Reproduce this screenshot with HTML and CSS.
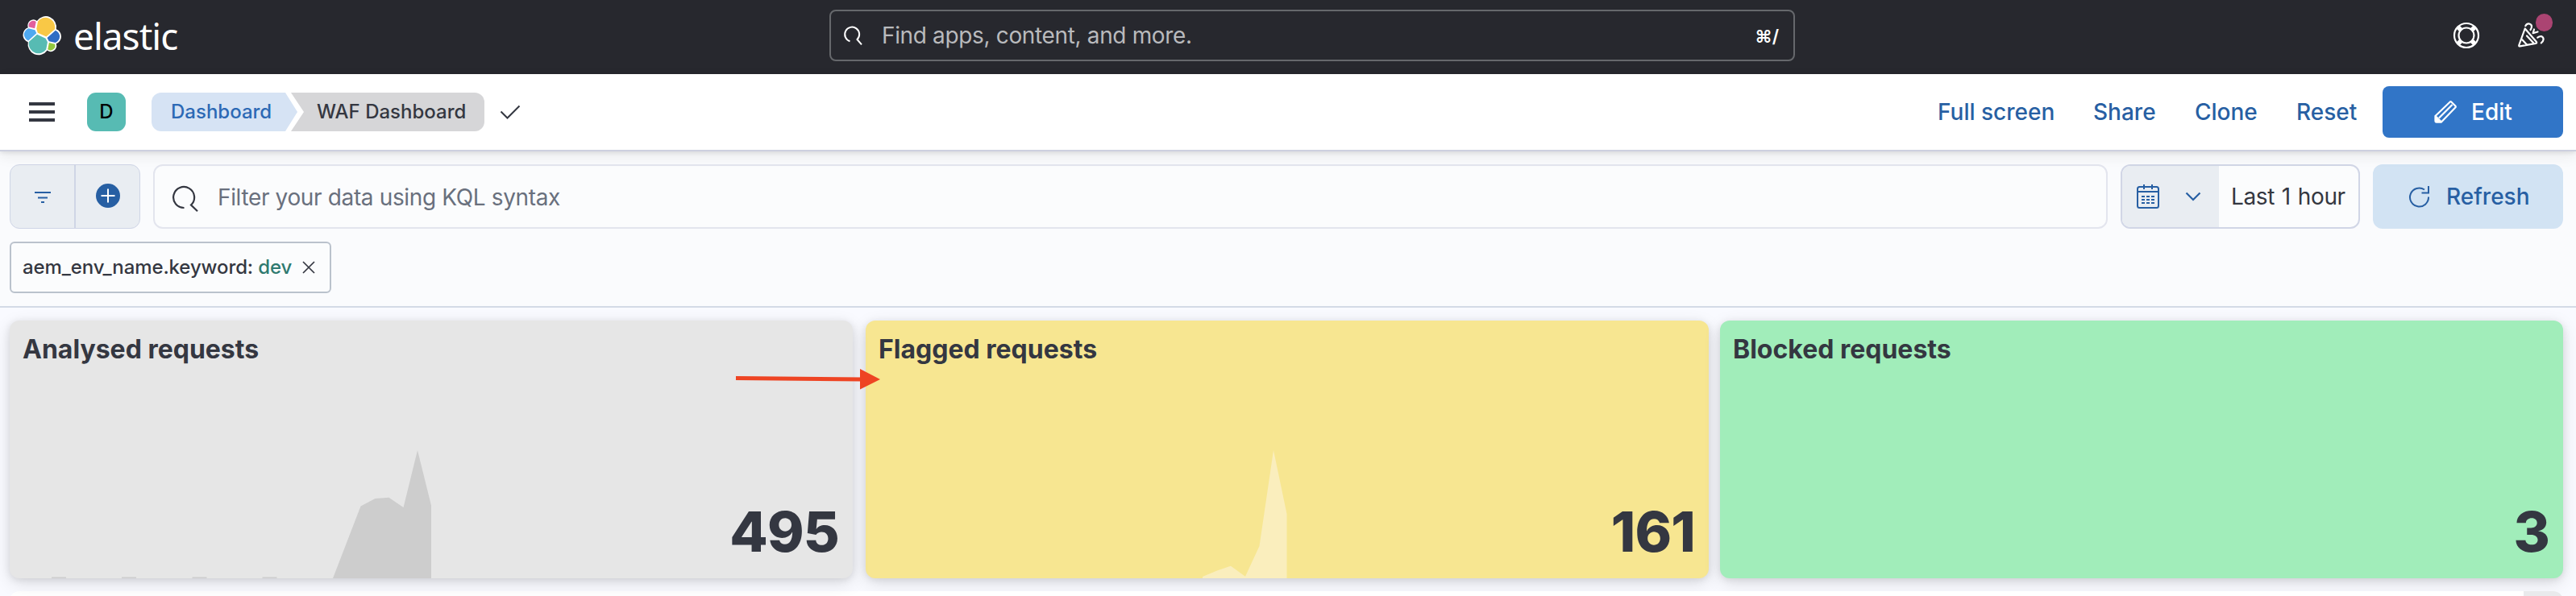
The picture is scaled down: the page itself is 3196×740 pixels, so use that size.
FILE: index.html
```html
<!DOCTYPE html>
<html lang="en">
<head>
<meta charset="utf-8">
<title>WAF Dashboard - Elastic</title>
<link rel="stylesheet" href="styles.css">
</head>
<body>
<header class="topbar">
  <div class="brand">
    <svg class="brand-mark" viewBox="0 0 32 32">
      <path fill="#fff" d="M32 16.77a6.334 6.334 0 0 0-1.14-3.63 6.269 6.269 0 0 0-3.02-2.29 9.098 9.098 0 0 0-.87-5.93A8.94 8.94 0 0 0 22.65.77a8.814 8.814 0 0 0-5.92-.32 8.93 8.93 0 0 0-4.82 3.49 4.78 4.78 0 0 0-5.79-.05 4.86 4.86 0 0 0-1.73 2.53 4.92 4.92 0 0 0 .12 3.08 6.328 6.328 0 0 0-3.03 2.3A6.414 6.414 0 0 0 .32 15.47c0 1.31.4 2.59 1.14 3.66a6.282 6.282 0 0 0 3.05 2.3 9.15 9.15 0 0 0 .87 5.92 8.98 8.98 0 0 0 4.32 4.15 8.86 8.86 0 0 0 5.91.32 8.97 8.97 0 0 0 4.82-3.5 4.77 4.77 0 0 0 5.77.04 4.86 4.86 0 0 0 1.73-2.52 4.92 4.92 0 0 0-.12-3.07 6.321 6.321 0 0 0 3.04-2.29A6.406 6.406 0 0 0 32 16.77"/>
      <path fill="#F9C846" d="m12.58 13.79 7.01 3.24 7.08-6.28c.1-.52.15-1.05.15-1.59a8 8 0 0 0-1.47-4.66 7.85 7.85 0 0 0-3.88-2.91 7.75 7.75 0 0 0-4.82-.05 7.85 7.85 0 0 0-3.94 2.82l-1.18 6.17z"/>
      <path fill="#57BBB3" d="M5.33 21.24c-.1.53-.15 1.07-.15 1.61 0 1.69.53 3.33 1.51 4.7a7.9 7.9 0 0 0 3.93 2.91 7.8 7.8 0 0 0 4.87.03 7.9 7.9 0 0 0 3.97-2.86l1.17-6.14-1.56-3.01-7.04-3.24z"/>
      <path fill="#E25F9C" d="m5.29 9.06 4.8 1.15 1.05-5.51a3.74 3.74 0 0 0-4.54-.03A3.82 3.82 0 0 0 5.29 9.06"/>
      <path fill="#4FA9F0" d="M4.87 10.21a5.38 5.38 0 0 0-2.55 1.98 5.43 5.43 0 0 0-.06 6.15 5.3 5.3 0 0 0 2.5 2.03l6.74-6.15-1.24-2.67z"/>
      <path fill="#93C83E" d="M20.87 27.54a3.7 3.7 0 0 0 4.53.03 3.83 3.83 0 0 0 1.31-4.39l-4.8-1.13z"/>
      <path fill="#2F6DC4" d="m21.85 20.78 5.28 1.25a5.38 5.38 0 0 0 2.55-1.98 5.43 5.43 0 0 0 .06-6.14 5.3 5.3 0 0 0-2.51-2.03l-6.9 6.11z"/>
    </svg>
    <span class="brand-name">elastic</span>
  </div>
  <div class="global-search">
    <svg class="gs-icon" viewBox="0 0 24 24"><path d="M8.500 19.200A9 9 0 1 1 17.500 17L23 23.300"/></svg>
    <span class="gs-text">Find apps, content, and more.</span>
    <span class="gs-keys">⌘/</span>
  </div>
  <div class="top-actions">
    <svg class="help" viewBox="0 0 32 32">
      <circle cx="16" cy="16" r="15"/><circle cx="16" cy="16" r="9.500"/>
      <path class="straps" d="M5.500 5.500l4 4M26.500 5.500l-4 4M5.500 26.500l4-4M26.500 26.500l-4-4"/>
    </svg>
    <div class="news">
      <svg class="cheer" viewBox="0 0 32 32">
        <path d="M8.700 7.500L1.300 28q-.5 1.700 1.300 1.400L22 25.800q2-.5.700-2zM11 16.500l8 8.500M5.500 21.500l5.500 6M9.300 4.200Q11 1.200 14 1.500q3.200.8 3 3.500 0 2-1.500 4M20 8.500L18.600 13.200L24.500 11.500M24.300 18.700q2.500-2 5-1.500 2.500 1 2.300 4-.3 2.300-2.800 4.100"/>
      </svg>
      <i class="news-dot"></i>
    </div>
  </div>
</header>

<nav class="appbar">
  <div class="menu"><i></i><i></i><i></i></div>
  <div class="space">D</div>
  <div class="crumbs">
    <span class="crumb crumb-link">Dashboard</span>
    <span class="crumb crumb-current">WAF Dashboard</span>
  </div>
  <svg class="saved" viewBox="0 0 26 18"><path d="M1.500 8.500L9.500 16.500L24.500 1.500"/></svg>
  <div class="app-actions">
    <span class="act act-full">Full screen</span>
    <span class="act act-share">Share</span>
    <span class="act act-clone">Clone</span>
    <span class="act act-reset">Reset</span>
    <span class="edit">
      <svg class="pencil" viewBox="0 0 28 28"><path d="M1.500 19L19.500 1.700q1-1 2 0l4.800 4.800q1 1 0 2L9 26.500H3q-1.500 0-1.500-1.500zM2 19.500l6.500 6.500M6 21.500L22.500 5"/><path class="tip" d="M2 21l5 5.500H3q-1 0-1-1z"/></svg>
      <span>Edit</span>
    </span>
  </div>
</nav>

<section class="query">
  <div class="query-row">
    <div class="filter-group">
      <span class="fg-btn fg-menu"><svg class="fg-lines" viewBox="0 0 20 14"><path d="M0 1h20M4 7.500h12M8 13h4"/></svg></span>
      <span class="fg-btn fg-add"><svg class="fg-plus" viewBox="0 0 30 30"><circle cx="15" cy="15" r="15"/><path d="M15 6.500v17M6.500 15h17"/></svg></span>
    </div>
    <div class="kql">
      <svg class="kql-icon" viewBox="0 0 32 32"><path d="M14.500 27A13 13 0 1 1 23 23.500L31 31.200"/></svg>
      <span class="kql-text">Filter your data using KQL syntax</span>
    </div>
    <div class="dates">
      <div class="dates-quick">
        <svg class="cal" viewBox="0 0 28 30"><rect x="1" y="3" width="26" height="26" rx="2.500"/><path d="M1 9h26M9 0v6M19 0v6"/><path class="days" d="M6 15h16M6 19h16M6 23h16"/></svg>
        <svg class="chev" viewBox="0 0 20 12"><path d="M1.500 1.500L10 10L18.500 1.500"/></svg>
      </div>
      <span class="dates-label">Last 1 hour</span>
    </div>
    <div class="refresh">
      <svg class="refresh-icon" viewBox="0 0 26 28"><path d="M24 14.500A11.500 11.500 0 1 1 19 5.500M24 1v8.500h-8.500"/></svg>
      <span>Refresh</span>
    </div>
  </div>
  <div class="pill">
    <span>aem_env_name.keyword: <b>dev</b></span>
    <svg class="pill-x" viewBox="0 0 16 16"><path d="M1 1l14 14M15 1L1 15"/></svg>
  </div>
</section>

<main class="board">
  <div class="metrics">
    <article class="metric metric-grey">
      <svg class="spark" viewBox="0 0 1046 320" preserveAspectRatio="none"><path fill="#cdcdcd" d="M401 320L435.500 230.500L453.500 221L470.500 219.700L488.500 232L506 161L523 229.500V320zM52 318.500h18v1.500h-18zM139 318.500h18v1.500h-18zM226.500 318.500h18v1.500h-18zM313.500 318.500h18v1.500h-18z"/></svg>
      <h2>Analysed requests</h2>
      <strong>495</strong>
      <svg class="pointer" viewBox="0 0 180 26"><path stroke="#ee4423" stroke-width="5" d="M0 11.500L156 13"/><path fill="#ee4423" d="M154 0L179 13L154 25.500z"/></svg>
    </article>
    <article class="metric metric-yellow">
      <svg class="spark" viewBox="0 0 1046 320" preserveAspectRatio="none"><path fill="#faeebd" d="M418 320V318L436 310.500L453 304.700L471 317.700L488.500 280L506 161L522.500 240V320z"/></svg>
      <h2>Flagged requests</h2>
      <strong>161</strong>
    </article>
    <article class="metric metric-green">
      <h2>Blocked requests</h2>
      <strong>3</strong>
    </article>
  </div>
  <div class="next-panel"><i class="panel-menu"></i></div>
</main>
</body>
</html>
```
FILE: styles.css
```css
* { box-sizing: border-box; }
body {
  margin: 0;
  width: 3196px;
  height: 740px;
  overflow: hidden;
  background: #fafbfd;
  color: #343741;
  font: 400 28px/1.2 Inter, "Liberation Sans", sans-serif;
}
svg { display: block; flex: none; fill: none; overflow: visible; }
span { white-space: nowrap; }

.topbar {
  display: grid;
  grid-template-columns: 1029px 1198px 1fr;
  align-items: center;
  height: 92px;
  padding-bottom: 4px;
  background: #27282e;
}
.brand { display: flex; align-items: center; gap: 15px; padding-left: 28px; }
.brand-mark { width: 48px; height: 48px; }
.brand-name { color: #fff; font: 400 46px/48px "Noto Sans", sans-serif; letter-spacing: -1px; }
.global-search {
  display: flex;
  align-items: center;
  height: 64px;
  padding: 0 18px 0 15px;
  border: 2px solid #66686c;
  border-radius: 8px;
}
.gs-icon { width: 24px; height: 24px; stroke: #fff; stroke-width: 2; }
.gs-text { margin-left: 24px; padding-top: 2px; color: #b9babd; letter-spacing: -.35px; }
.gs-keys { margin-left: auto; padding-top: 2px; color: #fff; font-size: 22px; font-weight: 600; }
.top-actions { display: flex; justify-content: flex-end; gap: 48px; padding-right: 40px; }
.help, .cheer { width: 32px; height: 32px; stroke: #fff; stroke-width: 2.200; }
.straps { stroke-width: 5.500; }
.cheer { stroke-linejoin: round; stroke-linecap: round; }
.news { position: relative; }
.news-dot { position: absolute; left: 21.500px; top: -11px; width: 21.500px; height: 21.500px; border-radius: 50%; background: #ab4472; }

.appbar {
  position: relative;
  display: flex;
  align-items: center;
  height: 96px;
  padding: 0 16px 0 36px;
  background: #fff;
  border-bottom: 2px solid #cdd0df;
  box-shadow: 0 2px 5px rgba(0,0,0,.08), 0 6px 16px rgba(0,0,0,.07);
}
.menu { display: flex; flex-direction: column; gap: 6px; width: 32px; }
.menu i { height: 4px; background: #343741; }
.space { width: 48px; height: 48px; margin-left: 40px; border-radius: 11px; background: #57bbb3; color: #000; text-align: center; font-size: 24px; font-weight: 500; line-height: 48px; }
.crumbs { display: flex; margin-left: 32px; font-size: 24px; font-weight: 500; line-height: 48px; }
.crumb { height: 48px; }
.crumb-link { width: 181px; padding-left: 24px; border-radius: 12px 0 0 12px; background: #d6e3f4; color: #2c69b5; clip-path: polygon(0 0, 166px 0, 181px 50%, 166px 100%, 0 100%); }
.crumb-current { width: 240px; margin-left: -8px; padding-left: 32px; border-radius: 0 12px 12px 0; background: #d6d6d8; clip-path: polygon(0 0, 100% 0, 100% 100%, 0 100%, 16px 50%); }
.saved { width: 26px; height: 18px; margin-left: 19px; stroke: #343741; stroke-width: 2; }
.app-actions { display: flex; align-items: center; margin-left: auto; color: #275fa3; font-weight: 500; }
.act { display: block; padding-top: 1px; }
.act-full { width: 193px; }
.act-share { width: 126px; }
.act-clone { width: 126px; }
.act-reset { width: 107px; }
.edit { display: flex; align-items: center; gap: 18px; width: 224px; height: 64px; padding-left: 64px; border-radius: 8px; background: #3175c7; color: #fff; }
.edit span { padding-top: 1px; }
.pencil { width: 28px; height: 28px; stroke: #fff; stroke-width: 2.200; }
.tip { fill: #fff; }

.query { height: 194px; padding: 16px 16px 0 12px; border-bottom: 2px solid #d3dae6; }
.query-row { display: flex; height: 80px; }
.filter-group { display: flex; width: 162px; border: 1.500px solid #cfd5e6; border-radius: 12px; background: #e9edf2; overflow: hidden; }
.fg-btn { display: flex; flex: 1; align-items: center; justify-content: center; }
.fg-add { border-left: 2px solid #cfd5e6; }
.fg-lines { width: 20px; height: 14px; margin-top: 2px; stroke: #275fa3; stroke-width: 2.200; }
.fg-plus { width: 30px; height: 30px; margin-top: -2px; fill: #275fa3; stroke: none; }
.fg-plus path { stroke: #fff; stroke-width: 2; }
.kql { display: flex; align-items: center; width: 2425px; margin-left: 16px; padding-left: 22px; border: 2px solid #e3e5ee; border-radius: 12px; background: #fbfcfd; }
.kql-icon { width: 32px; height: 32px; margin-top: 5px; stroke: #343741; stroke-width: 2.200; }
.kql-text { margin-left: 24px; padding-top: 3px; color: #69707d; letter-spacing: -.36px; }
.dates { display: flex; align-items: center; width: 297px; margin-left: 16px; border: 2px solid #d1d6e6; border-radius: 12px; background: #fbfcfd; overflow: hidden; }
.dates-quick { display: flex; align-items: center; gap: 32px; width: 120px; height: 100%; padding-left: 18px; background: #e9edf2; }
.cal { width: 28px; height: 30px; stroke: #275fa3; stroke-width: 2; }
.days { stroke-dasharray: 4 2; }
.chev { width: 20px; height: 12px; stroke: #275fa3; stroke-width: 2.200; }
.dates-label { margin-left: 15px; padding-top: 1px; letter-spacing: -.4px; word-spacing: 1.500px; }
.refresh { display: flex; align-items: center; gap: 20px; width: 236px; margin-left: 16px; padding-left: 45px; border-radius: 12px; background: #d2e3f3; color: #275fa3; font-weight: 500; }
.refresh span { padding-top: 1px; }
.refresh-icon { width: 26px; height: 28px; stroke: #275fa3; stroke-width: 2; }
.pill { display: flex; align-items: center; gap: 13px; width: 399px; height: 64px; margin-top: 16px; padding-left: 14px; border: 2px solid #bac2cc; border-radius: 6px; background: #fbfcfd; font-size: 24px; font-weight: 500; letter-spacing: -.1px; }
.pill b { color: #2f7a70; font-weight: 500; }
.pill-x { width: 16px; height: 16px; stroke: #343741; stroke-width: 1.700; }

.board { height: 358px; padding: 16px 16px 0 12px; background: #f9faff; overflow: hidden; }
.metrics { display: grid; grid-template-columns: 1062px 1060px 1046px; height: 320px; }
.metric {
  position: relative;
  display: flex;
  flex-direction: column;
  justify-content: space-between;
  width: 1046px;
  padding: 17px 17px 0 16px;
  border-radius: 12px;
  box-shadow: 0 2px 10px rgba(0,0,0,.10), 0 6px 22px rgba(0,0,0,.11);
}
.metric-grey { z-index: 1; background: #e6e6e6; }
.metric-yellow { background: #f7e691; }
.metric-green { background: #a1edba; }
.metric h2 { position: relative; margin: 0; font-size: 32px; font-weight: 700; line-height: 38px; }
.metric strong { position: relative; align-self: flex-end; font-size: 69px; font-weight: 800; line-height: 84px; letter-spacing: -.8px; margin-bottom: 16px; }
.spark { position: absolute; inset: 0; width: 100%; height: 100%; }
.pointer { position: absolute; left: 901px; top: 60px; width: 180px; height: 26px; }
.next-panel { position: relative; display: flex; justify-content: flex-end; height: 24px; margin-top: 16px; border-radius: 12px 12px 0 0; background: #fff; overflow: hidden; }
.panel-menu { width: 49px; background: #e9eaec; }
```
